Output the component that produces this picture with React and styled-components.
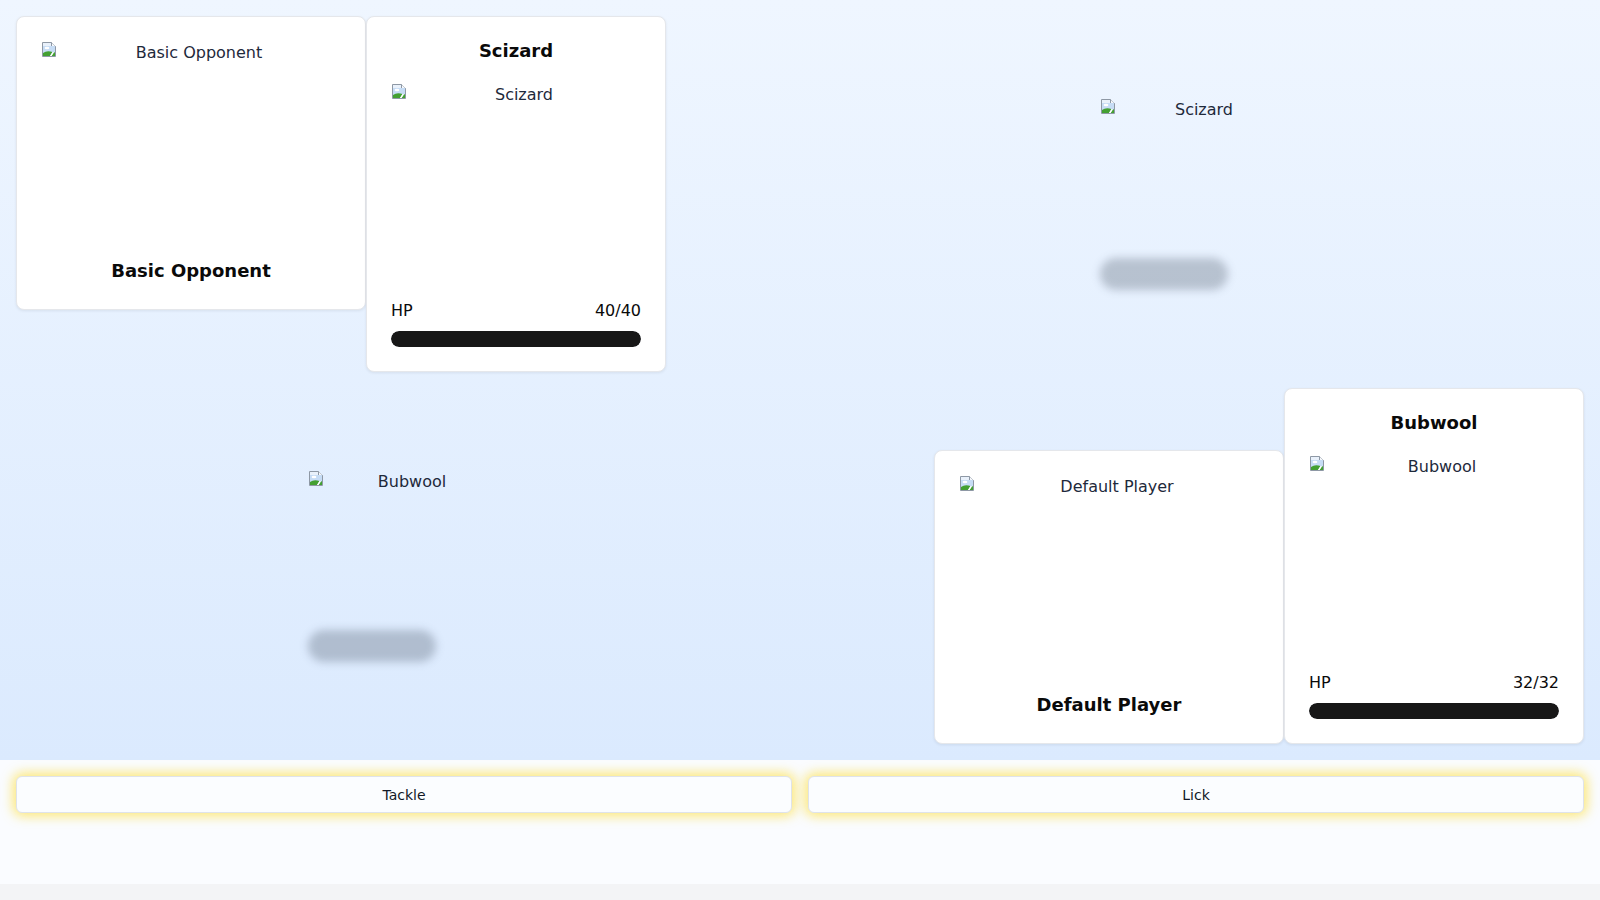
import React from 'react';
import styled, { createGlobalStyle } from 'styled-components';

const GlobalStyle = createGlobalStyle`
  * { box-sizing: border-box; }
  body {
    margin: 0;
    background: #f3f4f6;
    font-family: "DejaVu Sans", "Noto Sans", sans-serif;
    color: #0a0a0a;
  }
`;

const Screen = styled.div`
  display: flex;
  flex-direction: column;
  width: 100%;
`;

const Arena = styled.div`
  display: grid;
  grid-template-columns: 1fr 1fr;
  grid-template-rows: 356px 356px;
  gap: 16px;
  padding: 16px;
  height: 760px;
  background: linear-gradient(to bottom, #eff6ff, #dbeafe);
`;

const Corner = styled.div`
  display: flex;
  justify-content: ${p => p.$justify || 'flex-start'};
  align-items: ${p => p.$align || 'flex-start'};
  min-width: 0;
`;

const CardGroup = styled.div`
  display: flex;
  align-items: ${p => p.$align || 'flex-start'};
`;

const Card = styled.div`
  display: flex;
  flex-direction: column;
  width: ${p => p.$width}px;
  padding: 24px;
  background: #ffffff;
  border: 1px solid #e5e7eb;
  border-radius: 8px;
  box-shadow: 0 1px 3px rgba(15, 23, 42, 0.08);
`;

const TrainerName = styled.h3`
  margin: 24px 0 0;
  font-size: 18px;
  line-height: 28px;
  font-weight: 700;
  text-align: center;
`;

const MonName = styled.h3`
  margin: 1px 0 23px;
  font-size: 18px;
  line-height: 18px;
  font-weight: 700;
  text-align: center;
`;

const ImageBox = styled.div`
  display: flex;
  align-items: flex-start;
  width: ${p => (p.$size ? `${p.$size}px` : '100%')};
  height: 192px;
`;

const BrokenIcon = styled.svg`
  flex: 0 0 16px;
  width: 16px;
  height: 16px;
  margin-top: 1px;
`;

const AltText = styled.span`
  flex: 1;
  font-size: 16px;
  line-height: 24px;
  text-align: center;
  color: #1e293b;
  white-space: nowrap;
`;

const Sprite = styled.div`
  position: relative;
  width: 192px;
  height: 192px;
`;

const GroundShadow = styled.div`
  position: absolute;
  left: 0;
  bottom: 0;
  width: 128px;
  height: 32px;
  border-radius: 9999px;
  background: rgba(30, 41, 59, 0.24);
  filter: blur(4px);
`;

const HpRow = styled.div`
  display: flex;
  justify-content: space-between;
  margin-top: 24px;
  font-size: 16px;
  line-height: 24px;
`;

const HpTrack = styled.div`
  margin-top: 8px;
  height: 16px;
  border-radius: 9999px;
  background: #e5e7eb;
  overflow: hidden;
`;

const HpFill = styled.div`
  height: 100%;
  border-radius: 9999px;
  background: #171717;
`;

const MovePanel = styled.div`
  display: grid;
  grid-template-columns: 1fr 1fr;
  align-content: start;
  gap: 16px;
  height: 124px;
  padding: 16px;
  background: #fafcff;
`;

const MoveButton = styled.button`
  height: 37px;
  padding-top: 2px;
  border: 1px solid #dfe3ea;
  border-radius: 6px;
  background: #fbfdff;
  font-family: "DejaVu Sans", sans-serif;
  font-size: 14px;
  color: #111827;
  cursor: pointer;
  box-shadow: 0 0 12px 3px rgba(253, 224, 71, 0.75);
`;

const Broken = () => (
  <BrokenIcon viewBox="0 0 16 16">
    <path d="M1.5 0.5 H10.5 L14.5 4.5 V14.5 H1.5 Z" fill="#e9f1fb" stroke="#8e98a5" />
    <path d="M10.5 0.5 V4.5 H14.5" fill="#f6f8fb" stroke="#8e98a5" />
    <rect x="2" y="4" width="12" height="7" fill="#c6dcf5" />
    <ellipse cx="6" cy="6" rx="2.4" ry="1.3" fill="#ffffff" />
    <path d="M2 14 L2 11 Q6 8 11.5 10 L9 14 Z" fill="#43a032" />
    <path d="M10.5 14 L13 10.3 L14 10.6 L14 14 Z" fill="#43a032" />
    <path d="M9 14 L11.5 10 L13 10.3 L10.5 14 Z" fill="#ffffff" />
  </BrokenIcon>
);

const Picture = ({ alt, size }) => (
  <ImageBox $size={size} role="img" aria-label={alt}>
    <Broken />
    <AltText>{alt}</AltText>
  </ImageBox>
);

const TrainerCard = ({ name }) => (
  <Card $width={350}>
    <Picture alt={name} />
    <TrainerName>{name}</TrainerName>
  </Card>
);

const MonCard = ({ name, hp, maxHp }) => (
  <Card $width={300}>
    <MonName>{name}</MonName>
    <Picture alt={name} />
    <HpRow>
      <span>HP</span>
      <span>{hp}/{maxHp}</span>
    </HpRow>
    <HpTrack>
      <HpFill style={{ width: `${(hp / maxHp) * 100}%` }} />
    </HpTrack>
  </Card>
);

const FieldSprite = ({ name }) => (
  <Sprite>
    <GroundShadow />
    <Picture alt={name} size={192} />
  </Sprite>
);

const moves = ['Tackle', 'Lick'];

export default function App() {
  return (
    <Screen>
      <GlobalStyle />
      <Arena>
        <Corner>
          <CardGroup>
            <TrainerCard name="Basic Opponent" />
            <MonCard name="Scizard" hp={40} maxHp={40} />
          </CardGroup>
        </Corner>
        <Corner $justify="center" $align="center">
          <FieldSprite name="Scizard" />
        </Corner>
        <Corner $justify="center" $align="center">
          <FieldSprite name="Bubwool" />
        </Corner>
        <Corner $justify="flex-end" $align="flex-end">
          <CardGroup $align="flex-end">
            <TrainerCard name="Default Player" />
            <MonCard name="Bubwool" hp={32} maxHp={32} />
          </CardGroup>
        </Corner>
      </Arena>
      <MovePanel>
        {moves.map(m => (
          <MoveButton key={m}>{m}</MoveButton>
        ))}
      </MovePanel>
    </Screen>
  );
}
